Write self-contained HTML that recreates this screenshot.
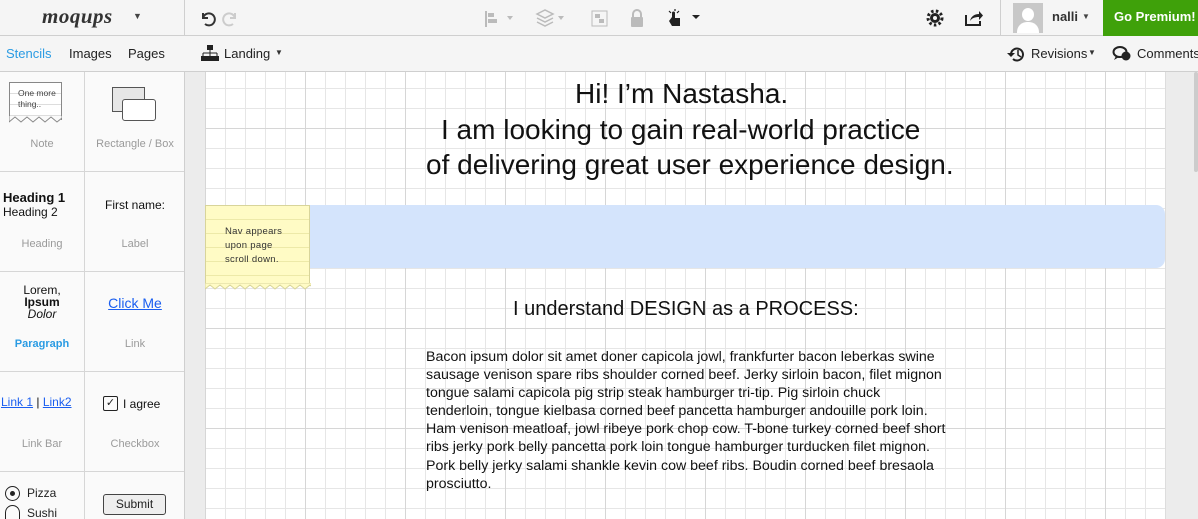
<!DOCTYPE html>
<html><head><style>
*{margin:0;padding:0;box-sizing:border-box}
html,body{width:1198px;height:519px;overflow:hidden}
body{font-family:"Liberation Sans",Arial,sans-serif;background:#f5f5f5;position:relative;color:#222}
.abs{position:absolute}
.top{left:0;top:0;width:1198px;height:36px;background:#f5f5f5;border-bottom:1px solid #cfcfcf}
.bar2{left:0;top:36px;width:1198px;height:36px;background:#f5f5f5;border-bottom:1px solid #cfcfcf}
.side{left:0;top:72px;width:185px;height:447px;background:#fafafa;border-right:1px solid #cfcfcf;overflow:hidden}
.cell{position:absolute;width:100px;height:100px;border-bottom:1px solid #d6d6d6;text-align:center;font-size:11px}
.lbl{position:absolute;left:0;right:0;top:66px;color:#9a9a9a;font-size:11px}
.canvas{left:205px;top:72px;width:960px;height:447px;background-color:#fff;
background-image:linear-gradient(to right,#d6d6d6 1px,transparent 1px),linear-gradient(to bottom,#d6d6d6 1px,transparent 1px),linear-gradient(to right,#e6e6e6 1px,transparent 1px),linear-gradient(to bottom,#e6e6e6 1px,transparent 1px);
background-size:100px 100px,100px 100px,20px 20px,20px 20px;
background-position:0 56px,0 56px,0 16px,0 16px}
.t{position:absolute;font-size:28px;color:#111;white-space:nowrap}
</style></head><body>
<div class="abs top"></div>
<div class="abs" style="left:184px;top:0;width:1px;height:72px;background:#cfcfcf"></div>
<div class="abs" style="left:42px;top:4px;font:italic bold 21px 'Liberation Serif',serif;color:#333;letter-spacing:0.5px">moqups</div>
<div class="abs" style="left:133px;top:11px;font-size:9px;color:#444">▼</div>
<svg class="abs" style="left:199px;top:10px" width="40" height="18"><path d="M4 3v5h5M4 8a6 6 0 1 1 2 6" fill="none" stroke="#333" stroke-width="2"/><path d="M40 3v5h-5M40 8a6 6 0 1 0-2 6" fill="none" stroke="#ccc" stroke-width="2" transform="translate(-4,0)"/></svg>
<svg class="abs" style="left:482px;top:9px" width="220" height="20">
<rect x="3" y="2" width="2" height="16" fill="#bbb"/><rect x="6" y="4" width="6" height="4" fill="#bbb"/><rect x="6" y="10" width="9" height="4" fill="#bbb"/><path d="M25 7l3 4 3-4z" fill="#bbb"/>
<path d="M55 5l8-4 8 4-8 4z M55 9l8 4 8-4 M55 13l8 4 8-4" fill="none" stroke="#bbb" stroke-width="1.5"/><path d="M76 7l3 4 3-4z" fill="#bbb"/>
<rect x="110" y="2" width="15" height="15" fill="none" stroke="#bbb"/><rect x="113" y="5" width="5" height="4" fill="#bbb"/><rect x="117" y="10" width="5" height="4" fill="#bbb"/>
<rect x="149" y="8" width="12" height="10" rx="1" fill="#bbb"/><path d="M151 9V5a4 4 0 0 1 8 0v4" fill="none" stroke="#bbb" stroke-width="2"/>
<path d="M190 8v-4a1.5 1.5 0 0 1 3 0v5h5v8h-8l-3-5z" fill="#222"/><path d="M187 2l2 2M193 0v2M197 2l-2 2" stroke="#222" stroke-width="1.2"/><path d="M210 6l4 4 4-4z" fill="#222"/>
</svg>
<svg class="abs" style="left:926px;top:9px" width="60" height="18"><circle cx="9" cy="9" r="5" fill="#222"/><circle cx="9" cy="9" r="7" fill="none" stroke="#222" stroke-width="3" stroke-dasharray="2.5 2.3"/><circle cx="9" cy="9" r="2" fill="#f5f5f5"/><path d="M40 6v10h14v-4" fill="none" stroke="#222" stroke-width="2"/><path d="M44 12c1-5 5-7 9-7v-3l4 4.5-4 4.5v-3c-4 0-7 1-9 4z" fill="#222"/></svg>
<div class="abs" style="left:1000px;top:0;width:1px;height:36px;background:#cfcfcf"></div>
<div class="abs" style="left:1013px;top:3px;width:30px;height:30px;background:#c8c8c8;overflow:hidden"><div style="position:absolute;left:9px;top:5px;width:12px;height:13px;border-radius:50%;background:#fff"></div><div style="position:absolute;left:4px;top:19px;width:22px;height:16px;border-radius:10px 10px 0 0;background:#fff"></div></div>
<div class="abs" style="left:1052px;top:9px;font-size:13px;font-weight:bold;color:#333">nalli</div>
<div class="abs" style="left:1082px;top:12px;font-size:8px;color:#444">▼</div>
<div class="abs" style="left:1103px;top:0;width:95px;height:36px;background:#3fa10a;color:#fff;font-weight:bold;font-size:13px;line-height:34px;padding-left:11px">Go Premium!</div>

<div class="abs bar2"></div>
<div class="abs" style="left:6px;top:46px;font-size:13px;color:#2a9be3">Stencils</div>
<div class="abs" style="left:69px;top:46px;font-size:13px;color:#222">Images</div>
<div class="abs" style="left:128px;top:46px;font-size:13px;color:#222">Pages</div>
<svg class="abs" style="left:200px;top:44px" width="20" height="18"><rect x="7" y="1" width="6" height="5" fill="#222"/><path d="M10 6v3M3 9h14M3 9v3M17 9v3M10 9v3" stroke="#222"/><rect x="1" y="12" width="6" height="5" fill="#222"/><rect x="13" y="12" width="6" height="5" fill="#222"/><rect x="7" y="12" width="6" height="5" fill="#222"/></svg>
<div class="abs" style="left:224px;top:46px;font-size:13px;color:#222">Landing</div>
<div class="abs" style="left:275px;top:48px;font-size:8px;color:#333">▼</div>
<svg class="abs" style="left:1007px;top:45px" width="20" height="18"><path d="M4 9a6 6 0 1 1 2 5" fill="none" stroke="#222" stroke-width="2"/><path d="M0 8h8l-4 4z" fill="#222"/><path d="M11 5v5l3 2" fill="none" stroke="#222" stroke-width="1.5"/></svg>
<div class="abs" style="left:1031px;top:46px;font-size:13px;color:#222">Revisions</div>
<div class="abs" style="left:1088px;top:48px;font-size:8px;color:#333">▼</div>
<svg class="abs" style="left:1112px;top:45px" width="22" height="18"><ellipse cx="8" cy="7" rx="6.5" ry="5" fill="none" stroke="#222" stroke-width="2"/><path d="M4 11l-2 4 5-3" fill="#222"/><circle cx="14" cy="11" r="4.5" fill="#222"/></svg>
<div class="abs" style="left:1137px;top:46px;font-size:13px;color:#222">Comments</div>

<div class="abs side">
<div class="abs" style="left:84px;top:0;width:1px;height:447px;background:#d6d6d6"></div>
<div class="cell" style="left:0;top:0;width:84px">
 <div style="position:absolute;left:9px;top:10px;width:53px;height:38px;border:1px solid #888;border-bottom:none;background:repeating-linear-gradient(#fff 0 10px,#ddd 10px 11px);text-align:left;font-size:8.5px;padding:5px 2px 0 8px;line-height:11px;color:#444;white-space:nowrap">One more<br>thing..</div>
 <svg style="position:absolute;left:9px;top:44px" width="53" height="10"><path d="M0 0v6l6-5 6 5 6-5 6 5 6-5 6 5 6-5 6 5 5-4V0" fill="#fafafa" stroke="#888"/></svg>
 <div class="lbl">Note</div></div>
<div class="cell" style="left:85px;top:0">
 <div style="position:absolute;left:27px;top:15px;width:33px;height:25px;border:1px solid #555;background:#e6e6e6"></div>
 <div style="position:absolute;left:37px;top:27px;width:34px;height:22px;border:1px solid #555;background:#fff;border-radius:3px"></div>
 <div class="lbl">Rectangle / Box</div></div>
<div class="cell" style="left:0;top:100px;width:84px;text-align:left;padding-left:3px">
 <div style="position:absolute;left:3px;top:18px;font-size:13px;font-weight:bold;color:#111">Heading 1</div>
 <div style="position:absolute;left:3px;top:33px;font-size:12px;color:#111">Heading 2</div>
 <div class="lbl" style="text-align:center">Heading</div></div>
<div class="cell" style="left:85px;top:100px"><div style="position:absolute;left:0;right:0;top:26px;font-size:12px;color:#111">First name:</div><div class="lbl">Label</div></div>
<div class="cell" style="left:0;top:200px;width:84px"><div style="position:absolute;left:0;right:0;top:12px;font-size:12px;line-height:12px;color:#111">Lorem,<br><b>Ipsum</b><br><i>Dolor</i></div><div class="lbl" style="color:#2a9be3;font-weight:bold">Paragraph</div></div>
<div class="cell" style="left:85px;top:200px"><div style="position:absolute;left:0;right:0;top:23px;font-size:14px;color:#1a5ef0;text-decoration:underline">Click Me</div><div class="lbl">Link</div></div>
<div class="cell" style="left:0;top:300px;width:84px"><div style="position:absolute;left:1px;top:23px;font-size:12px;color:#111;text-align:left"><u style="color:#1a5ef0">Link 1</u> | <u style="color:#1a5ef0">Link2</u></div><div class="lbl">Link Bar</div></div>
<div class="cell" style="left:85px;top:300px"><div style="position:absolute;left:18px;top:24px;width:15px;height:15px;border:1px solid #222;border-radius:2px;font-size:11px;line-height:13px">✓</div><div style="position:absolute;left:38px;top:25px;font-size:12px;color:#111">I agree</div><div class="lbl">Checkbox</div></div>
<div class="cell" style="left:0;top:400px;width:84px;height:47px;border:none"><div style="position:absolute;left:5px;top:14px;width:15px;height:15px;border:1px solid #222;border-radius:50%"><div style="margin:4px;width:5px;height:5px;border-radius:50%;background:#222"></div></div><div style="position:absolute;left:27px;top:14px;font-size:12px">Pizza</div><div style="position:absolute;left:5px;top:33px;width:15px;height:14px;border:1px solid #222;border-bottom:none;border-radius:8px 8px 0 0"></div><div style="position:absolute;left:27px;top:34px;font-size:12px">Sushi</div></div>
<div class="cell" style="left:85px;top:400px;height:47px;border:none"><div style="position:absolute;left:18px;top:22px;width:63px;height:21px;border:1px solid #444;border-radius:3px;background:#eee;font-size:12px;line-height:19px">Submit</div></div>
</div>
<div class="abs" style="left:185px;top:72px;width:20px;height:447px;background:#ececec"></div>
<div class="abs canvas"></div>
<div class="abs" style="left:1165px;top:72px;width:33px;height:447px;background:#ececec;border-left:1px solid #ddd"></div>
<div class="abs" style="left:1194px;top:72px;width:4px;height:100px;background:#ccc;border-radius:2px"></div>

<div class="abs" style="left:205px;top:205px;width:960px;height:63px;background:#d4e4fc;border-radius:0 9px 9px 0"></div>
<div class="abs" style="left:205px;top:205px;width:105px;height:80px;background:repeating-linear-gradient(#fffbc5 0 13px,#ede9a8 13px 14px);border:1px solid #d8d49a"></div>
<svg class="abs" style="left:205px;top:283px" width="106" height="8"><path d="M0 0v6l5-4 5 4 5-4 5 4 5-4 5 4 5-4 5 4 5-4 5 4 5-4 5 4 5-4 5 4 5-4 5 4 5-4 5 4 5-4 5 4 5-4 5 4 1-1V0z" fill="#fffbc5" stroke="#d8d49a"/></svg>
<div class="abs" style="left:225px;top:225px;font-size:9.5px;line-height:14px;color:#333;letter-spacing:0.3px">Nav appears<br>upon page<br>scroll down.</div>

<div class="t" style="left:575px;top:78px">Hi! I’m Nastasha.</div>
<div class="t" style="left:441px;top:114px">I am looking to gain real-world practice</div>
<div class="t" style="left:426px;top:149px">of delivering great user experience design.</div>
<div class="abs" style="left:513px;top:298px;font-size:20px;color:#111;white-space:nowrap">I understand DESIGN as a PROCESS:</div>
<div class="abs" style="left:426px;top:348px;font-size:14.2px;line-height:18.1px;color:#111;white-space:nowrap">Bacon ipsum dolor sit amet doner capicola jowl, frankfurter bacon leberkas swine<br>sausage venison spare ribs shoulder corned beef. Jerky sirloin bacon, filet mignon<br>tongue salami capicola pig strip steak hamburger tri-tip. Pig sirloin chuck<br>tenderloin, tongue kielbasa corned beef pancetta hamburger andouille pork loin.<br>Ham venison meatloaf, jowl ribeye pork chop cow. T-bone turkey corned beef short<br>ribs jerky pork belly pancetta pork loin tongue hamburger turducken filet mignon.<br>Pork belly jerky salami shankle kevin cow beef ribs. Boudin corned beef bresaola<br>prosciutto.</div>
</body></html>
